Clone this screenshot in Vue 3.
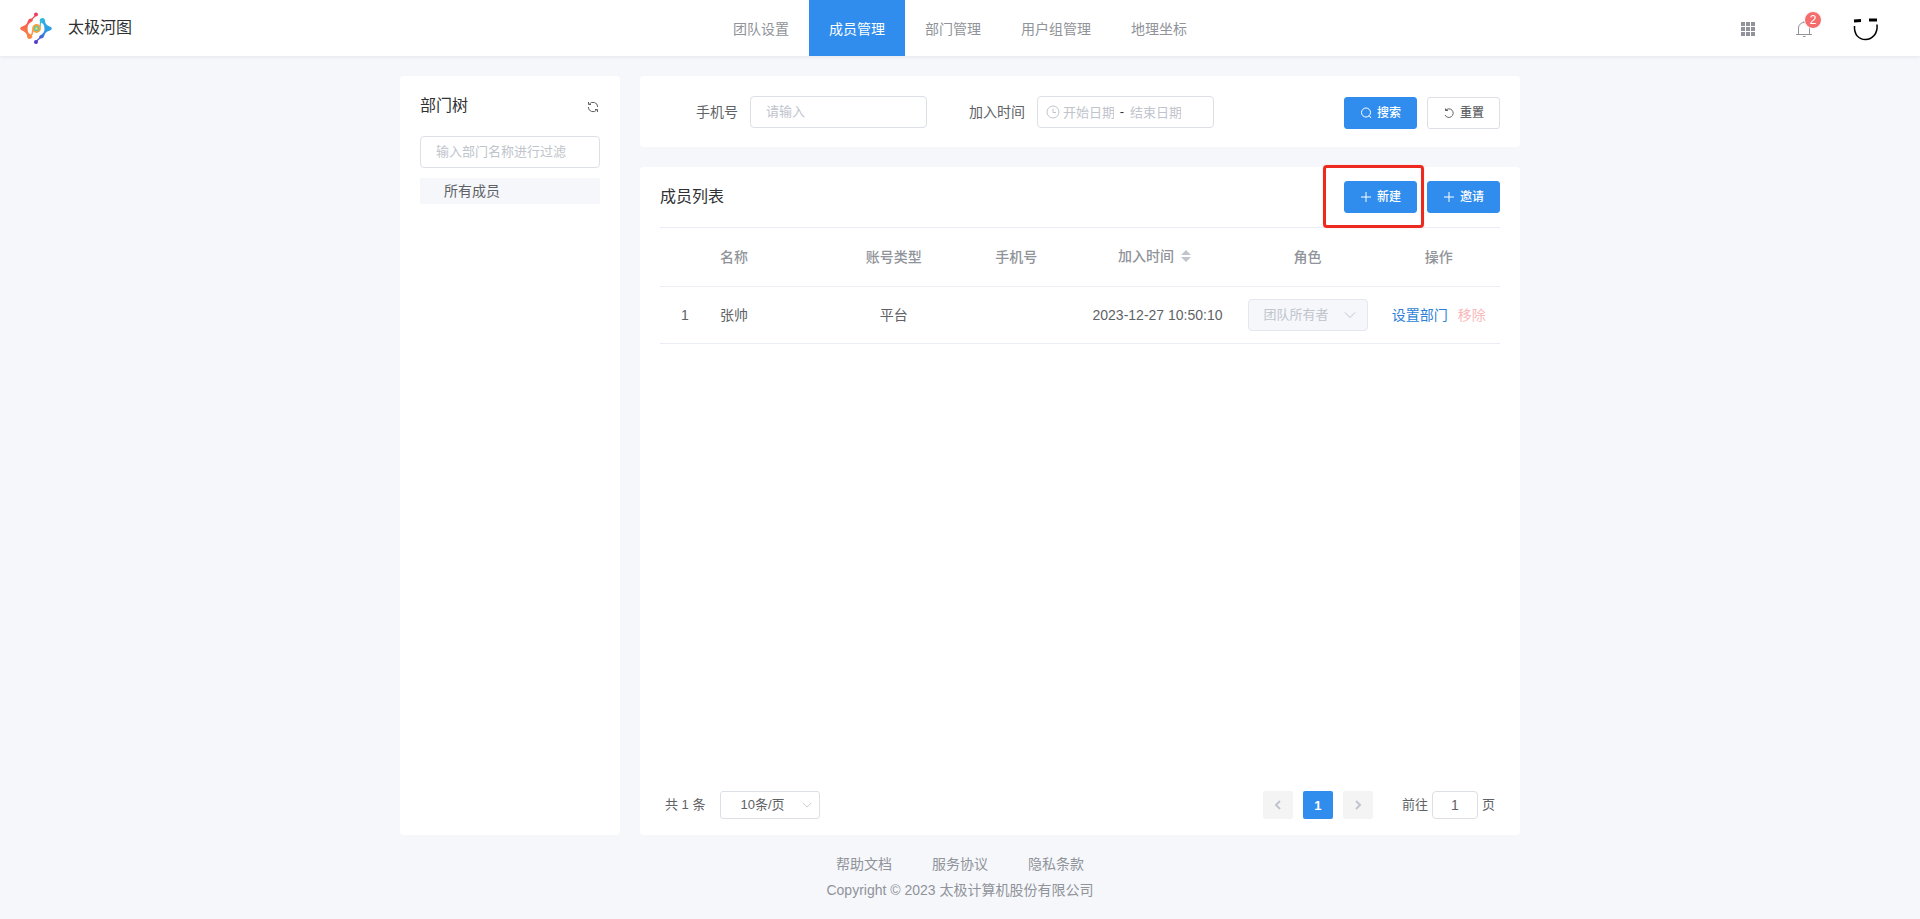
<script setup>
import { ref } from 'vue'

const navItems = ['团队设置', '成员管理', '部门管理', '用户组管理', '地理坐标']
const activeNav = ref('成员管理')
const footerLinks = ['帮助文档', '服务协议', '隐私条款']
const members = [
  { id: 1, name: '张帅', type: '平台', phone: '', joined: '2023-12-27 10:50:10', role: '团队所有者' },
]
const filterText = ref('')
const phone = ref('')
const page = ref('1')
const pageSize = ref('10条/页')
</script>

<template>
  <div class="page">
    <header class="header">
      <a class="brand" href="#">
        <svg class="logo" viewBox="0 0 32 32" width="32" height="32" fill="none" stroke-linecap="round" stroke-linejoin="round" aria-hidden="true">
          <defs>
            <linearGradient id="warm" x1="16" y1="1" x2="10" y2="27" gradientUnits="userSpaceOnUse">
              <stop offset="0" stop-color="#e8385f" />
              <stop offset="0.5" stop-color="#f5644c" />
              <stop offset="1" stop-color="#fb8c42" />
            </linearGradient>
            <linearGradient id="cool" x1="22" y1="6" x2="16" y2="31" gradientUnits="userSpaceOnUse">
              <stop offset="0" stop-color="#2cb9e0" />
              <stop offset="0.5" stop-color="#3193e2" />
              <stop offset="1" stop-color="#5a30c8" />
            </linearGradient>
          </defs>
          <path d="M16 3L11 8" stroke="url(#warm)" stroke-width="1.200" />
          <circle cx="16" cy="2.500" r="2" fill="url(#warm)" />
          <path d="M11 6.500C13 6.500 13.500 8.500 12 9.500C9 11 7.500 13 7.500 16C7.500 19.500 8.500 22 11 22.500C13.500 24 12 27 9.500 27C7.500 27 7 25.500 7 23.500C6.500 21 5 20 2 18.500C-.5 17.500 -.5 15.500 2 14.500C5 13.500 7 12.500 7.500 10C8 7.500 9.500 6.500 11 6.500Z" fill="url(#warm)" />
          <path d="M10.500 24.500C13 22.500 12 20 13 18" stroke="#fb9440" stroke-width="1.500" />
          <path d="M16 29.500L21 25" stroke="url(#cool)" stroke-width="1.200" />
          <circle cx="16" cy="30" r="2" fill="url(#cool)" />
          <path d="M21 26.500C19 26.500 18.500 24.500 20 23.500C23 22 24.500 20 24.500 17C24.500 13.500 23.500 11.500 21 10.500C18.500 9 20 6 22.500 6C24.500 6 25 7.500 25 9.500C25.500 12 27 13.500 30 14.500C32.500 15.500 32.500 17.500 30 18.500C27 19.500 25 20.500 24.500 23C24 25.500 22.500 26.500 21 26.500Z" fill="url(#cool)" />
          <path d="M21.500 9C19.500 11 20.500 13 20 15" stroke="#3fbdd0" stroke-width="1.200" />
          <circle cx="16.500" cy="16.500" r="3.500" fill="#55cbb0" stroke="#f8a03f" stroke-width="1.800" />
          <circle cx="16.500" cy="16.500" r="1.200" fill="#f6dc5a" />
        </svg>
        <span>太极河图</span>
      </a>
      <nav class="nav">
        <a v-for="item in navItems" :key="item" href="#" :class="{ active: item === activeNav }" @click.prevent="activeNav = item">{{ item }}</a>
      </nav>
      <div class="tools">
        <button class="icon-btn" aria-label="应用">
          <svg viewBox="0 0 14 14" width="14" height="14" fill="#909399">
            <path d="M0 0h4v4H0zM5 0h4v4H5zM10 0h4v4h-4zM0 5h4v4H0zM5 5h4v4H5zM10 5h4v4h-4zM0 10h4v4H0zM5 10h4v4H5zM10 10h4v4h-4z" />
          </svg>
        </button>
        <button class="icon-btn bell" aria-label="通知">
          <svg viewBox="0 0 16 18" width="16" height="18" fill="none" stroke="#909399">
            <path d="M0 14.500H16M2.500 14.500V8a5.500 5.500 0 0 1 11 0v6.500M8 2.500V1M7 16.500H9.500" />
          </svg>
          <span class="badge">2</span>
        </button>
        <button class="icon-btn" aria-label="用户">
          <svg viewBox="0 0 26 24" width="26" height="24" fill="none" stroke="#000">
            <path d="M1.500 9C1 18 6 22.500 12.500 22.500S25 17 24 7.500" stroke-width="1.500" />
            <path d="M1 4L8 3.500M16 3H24" stroke-width="3" />
          </svg>
        </button>
      </div>
    </header>

    <main class="main">
      <aside class="card side">
        <div class="side-head">
          <h2>部门树</h2>
          <button class="icon-btn" aria-label="刷新">
            <svg viewBox="0 0 12 12" width="12" height="12" fill="none" stroke="#606266">
              <path d="M2 3.500A4.700 4.700 0 0 1 10.700 6M10 8.500A4.700 4.700 0 0 1 1.300 6M1.500 1V3.500H4M10.500 11V8.500H8" />
            </svg>
          </button>
        </div>
        <input v-model="filterText" class="field" type="text" placeholder="输入部门名称进行过滤" aria-label="部门名称" />
        <ul class="tree">
          <li><a href="#">所有成员</a></li>
        </ul>
      </aside>

      <div class="content">
        <form class="card search" @submit.prevent>
          <div class="form-item">
            <label for="phone">手机号</label>
            <input id="phone" v-model="phone" class="field" type="text" placeholder="请输入" />
          </div>
          <div class="form-item">
            <label for="start">加入时间</label>
            <div class="field range">
              <svg viewBox="0 0 14 14" width="14" height="14" fill="none" stroke="#c0c4cc">
                <circle cx="7" cy="7" r="6" />
                <path d="M7 3.500V7.500H10" />
              </svg>
              <input id="start" type="text" placeholder="开始日期" />
              <span>-</span>
              <input type="text" placeholder="结束日期" aria-label="结束日期" />
            </div>
          </div>
          <div class="actions">
            <button class="btn primary" type="submit">
              <svg viewBox="0 0 12 12" width="12" height="12" fill="none" stroke="#fff">
                <circle cx="6" cy="5.500" r="4.500" />
                <path d="M9 8.500L11 11" />
              </svg>搜索
            </button>
            <button class="btn" type="reset">
              <svg viewBox="0 0 12 12" width="12" height="12" fill="none" stroke="#606266">
                <path d="M2.500 3.500A4.300 4.300 0 1 1 2 8M2.500 1.500V3.500H5" />
              </svg>重置
            </button>
          </div>
        </form>

        <section class="card list">
          <div class="list-head">
            <h2>成员列表</h2>
            <div class="actions">
              <div class="marked">
                <button class="btn primary">
                  <svg viewBox="0 0 12 12" width="12" height="12" stroke="#fff"><path d="M1 6H11M6 1V11" /></svg>新建
                </button>
              </div>
              <button class="btn primary">
                <svg viewBox="0 0 12 12" width="12" height="12" stroke="#fff"><path d="M1 6H11M6 1V11" /></svg>邀请
              </button>
            </div>
          </div>

          <table>
            <colgroup>
              <col class="c-index" /><col /><col /><col /><col class="c-time" /><col class="c-role" /><col />
            </colgroup>
            <thead>
              <tr>
                <th></th>
                <th class="left">名称</th>
                <th>账号类型</th>
                <th>手机号</th>
                <th>
                  <span class="sort">加入时间
                    <svg viewBox="0 0 10 12" width="10" height="12" fill="#c0c4cc"><path d="M5 0L10 5H0zM0 7H10L5 12z" /></svg>
                  </span>
                </th>
                <th>角色</th>
                <th>操作</th>
              </tr>
            </thead>
            <tbody>
              <tr v-for="m in members" :key="m.id">
                <td>{{ m.id }}</td>
                <td class="left">{{ m.name }}</td>
                <td>{{ m.type }}</td>
                <td>{{ m.phone }}</td>
                <td class="time">{{ m.joined }}</td>
                <td>
                  <div class="select role">
                    <select disabled aria-label="角色"><option>{{ m.role }}</option></select>
                    <svg viewBox="0 0 12 12" width="12" height="12" fill="none" stroke="#c0c4cc"><path d="M1 3.500L6 8.500L11 3.500" /></svg>
                  </div>
                </td>
                <td class="ops"><a href="#">设置部门</a><a class="danger" href="#">移除</a></td>
              </tr>
            </tbody>
          </table>

          <div class="pager">
            <span>共 1 条</span>
            <div class="select size">
              <select v-model="pageSize" aria-label="每页条数"><option>10条/页</option></select>
              <svg viewBox="0 0 12 12" width="10" height="10" fill="none" stroke="#c0c4cc"><path d="M1 3.500L6 8.500L11 3.500" /></svg>
            </div>
            <div class="pages">
              <button disabled aria-label="上一页">
                <svg viewBox="0 0 12 12" width="12" height="12" fill="none" stroke="#c0c4cc" stroke-width="2"><path d="M8 2L4 6L8 10" /></svg>
              </button>
              <button class="current">1</button>
              <button disabled aria-label="下一页">
                <svg viewBox="0 0 12 12" width="12" height="12" fill="none" stroke="#c0c4cc" stroke-width="2"><path d="M4 2L8 6L4 10" /></svg>
              </button>
            </div>
            <div class="jump">
              <label for="jump">前往</label>
              <input id="jump" v-model="page" type="text" />
              <span>页</span>
            </div>
          </div>
        </section>
      </div>
    </main>

    <footer class="footer">
      <div class="links"><a v-for="l in footerLinks" :key="l" href="#">{{ l }}</a></div>
      <div>Copyright © 2023 太极计算机股份有限公司</div>
    </footer>
  </div>
</template>

<style>
body {
  margin: 0;
}
</style>

<style scoped>
.page,
.page * {
  box-sizing: border-box;
}
.page {
  display: flex;
  flex-direction: column;
  min-height: 100vh;
  background: #f5f7fb;
  color: #606266;
  font-family: "Liberation Sans", "Noto Sans CJK SC", sans-serif;
  font-size: 14px;
  line-height: 20px;
}
a {
  color: inherit;
  text-decoration: none;
}
button,
input,
select {
  margin: 0;
  font-family: inherit;
  color: inherit;
}
svg {
  display: block;
  flex: none;
}
h2 {
  margin: 0;
  font-size: 16px;
  font-weight: 400;
  line-height: 24px;
  color: #303133;
}
.header {
  display: grid;
  grid-template-columns: 1fr auto 1fr;
  align-items: center;
  height: 56px;
  padding: 0 41px 0 20px;
  background: #fff;
  box-shadow: 0 1px 4px rgba(0, 21, 41, 0.08);
}
.brand {
  display: flex;
  align-items: center;
  gap: 16px;
  font-size: 16px;
  color: #303133;
}
.nav {
  display: flex;
  margin-left: 21px;
}
.nav a {
  padding: 2px 20px 0;
  line-height: 54px;
  color: #909399;
}
.nav a.active {
  background: #318ded;
  color: #fff;
}
.tools {
  display: flex;
  align-items: center;
  justify-content: flex-end;
  gap: 41px;
  padding-top: 2px;
}
.icon-btn {
  position: relative;
  padding: 0;
  border: 0;
  background: none;
}
.badge {
  position: absolute;
  top: -9px;
  right: -10px;
  width: 18px;
  height: 18px;
  border: 1px solid #fff;
  border-radius: 9px;
  background: #f56c6c;
  color: #fff;
  font-size: 12px;
  line-height: 16px;
  text-align: center;
}
.main {
  flex: 1;
  display: flex;
  gap: 20px;
  width: 100%;
  max-width: 1120px;
  margin: 0 auto;
  padding-top: 20px;
}
.card {
  border-radius: 4px;
  background: #fff;
}
.side {
  width: 220px;
  padding: 18px 20px;
}
.side-head {
  display: flex;
  align-items: center;
  justify-content: space-between;
  padding-right: 1px;
  margin-bottom: 18px;
}
.side-head .icon-btn {
  padding-top: 2px;
}
.field {
  width: 100%;
  height: 32px;
  padding: 0 15px 2px;
  border: 1px solid #dcdfe6;
  border-radius: 4px;
  background: #fff;
  font-size: 13px;
  outline: none;
}
input::placeholder {
  color: #c0c4cc;
  opacity: 1;
}
.tree {
  margin: 10px 0 0;
  padding: 0;
  list-style: none;
}
.tree a {
  display: block;
  padding-left: 24px;
  line-height: 26px;
  background: #f5f7fb;
}
.content {
  flex: 1;
  display: flex;
  flex-direction: column;
  gap: 20px;
  min-width: 0;
}
.search {
  display: flex;
  align-items: flex-start;
  gap: 42px;
  padding: 20px 20px 18px 56px;
}
.form-item {
  display: flex;
  align-items: center;
  gap: 12px;
  white-space: nowrap;
}
.form-item .field {
  width: 177px;
}
.search .actions {
  padding-top: 1px;
}
.form-item .range {
  display: flex;
  align-items: center;
  padding: 0 8px;
}
.range input {
  width: 51px;
  padding: 0;
  border: 0;
  outline: none;
  font-size: 13px;
}
.range svg {
  margin-right: 3px;
}
.range span {
  width: 16px;
  color: #303133;
  text-align: center;
}
.actions {
  display: flex;
  gap: 10px;
  margin-left: auto;
}
.btn {
  display: flex;
  align-items: center;
  gap: 5px;
  height: 32px;
  padding: 0 15px;
  border: 1px solid #dcdfe6;
  border-radius: 3px;
  background: #fff;
  font-size: 12px;
  font-weight: 500;
  line-height: 16px;
}
.btn.primary {
  border-color: #318ded;
  background: #318ded;
  color: #fff;
}
.marked {
  position: relative;
}
.marked::after {
  content: "";
  position: absolute;
  inset: -16px -7px -15px -21px;
  border: 3px solid #ec2a20;
  border-radius: 4px;
  box-shadow: 0 0 1px #f88;
  pointer-events: none;
}
.list {
  flex: 1;
  display: flex;
  flex-direction: column;
  padding: 0 20px 16px;
}
.list-head {
  display: flex;
  align-items: center;
  height: 60px;
}
table {
  width: 100%;
  border-collapse: collapse;
  border-top: 1px solid #ebeef5;
  table-layout: fixed;
}
.c-index {
  width: 50px;
}
.c-time {
  width: 160px;
}
.c-role {
  width: 140px;
}
th,
td {
  padding: 0 10px;
  border-bottom: 1px solid #ebeef5;
  text-align: center;
}
th {
  height: 59px;
  color: #909399;
  font-weight: 500;
}
td {
  height: 57px;
}
.left {
  text-align: left;
}
.time {
  white-space: nowrap;
}
.sort {
  display: flex;
  align-items: center;
  justify-content: center;
  gap: 7px;
  padding: 0 6px 2px 0;
}
.select {
  position: relative;
  display: flex;
  align-items: center;
  border: 1px solid #dcdfe6;
  border-radius: 4px;
}
.select select {
  appearance: none;
  width: 100%;
  height: 100%;
  padding: 0 15px 2px;
  border: 0;
  background: none;
  font-size: 13px;
  outline: none;
}
.select svg {
  position: absolute;
  right: 11px;
  pointer-events: none;
}
.role {
  height: 32px;
  border-color: #e4e7ed;
  background: #f5f7fb;
}
.role select {
  color: #c0c4cc;
  opacity: 1;
}
.ops {
  color: #2d7fd6;
  white-space: nowrap;
}
.ops a + a {
  margin-left: 10px;
}
.ops .danger {
  color: #f9b9b9;
}
.pager {
  display: flex;
  align-items: center;
  margin-top: auto;
  padding: 0 5px;
  font-size: 13px;
}
.size {
  width: 100px;
  height: 28px;
  margin-left: 15px;
  border-radius: 3px;
}
.size select {
  padding: 0 19px 2px;
}
.size svg {
  right: 7px;
}
.pages {
  display: flex;
  gap: 10px;
  margin-left: auto;
}
.pages button {
  display: grid;
  place-items: center;
  width: 30px;
  height: 28px;
  padding: 0;
  border: 0;
  border-radius: 2px;
  background: #f4f4f5;
  font-size: 13px;
  font-weight: 700;
}
.pages .current {
  background: #318ded;
  color: #fff;
}
.jump {
  display: flex;
  align-items: center;
  gap: 4px;
  margin-left: 29px;
}
.jump input {
  width: 46px;
  height: 28px;
  padding: 0;
  border: 1px solid #dcdfe6;
  border-radius: 4px;
  font-size: 14px;
  text-align: center;
  outline: none;
}
.footer {
  padding: 16px 0;
  color: #909399;
  line-height: 26px;
  text-align: center;
}
.links {
  display: flex;
  justify-content: center;
  gap: 40px;
}
</style>
